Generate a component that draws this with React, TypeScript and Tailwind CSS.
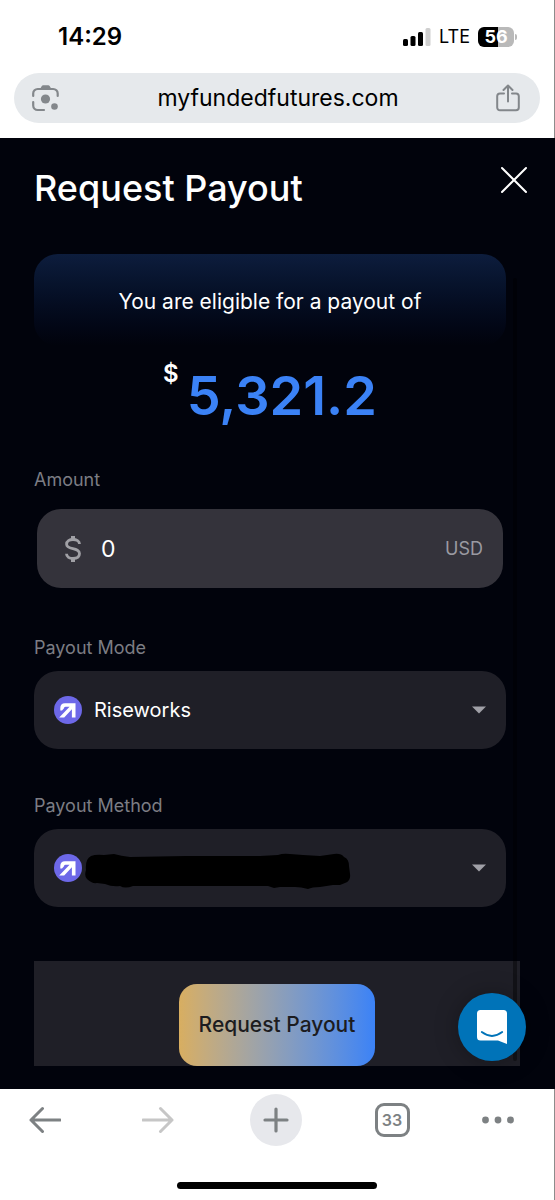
import type { ReactNode } from "react";

const StatusBar = () => (
  <div className="flex h-[73px] items-center justify-between pl-[58px] pr-[37px] text-black">
    <span className="text-2xl font-semibold">14:29</span>
    <div className="flex items-center gap-2">
      <svg className="h-[18px] w-7" viewBox="0 0 28 18" aria-hidden="true">
        <rect x="0" y="11" width="5" height="7" rx="1.5" />
        <rect x="7.5" y="8" width="5" height="10" rx="1.5" />
        <rect x="15" y="4" width="5" height="14" rx="1.5" />
        <rect x="22.5" y="0" width="5" height="18" rx="1.5" fill="#cfcfcf" />
      </svg>
      <span className="text-lg">LTE</span>
      <div className="flex items-center gap-px">
        <div className="flex h-5 w-9 items-center justify-center rounded-md bg-linear-to-r from-black from-56% to-[#b9b9b9] to-56% text-lg font-bold text-white">
          56
        </div>
        <div className="h-1.5 w-0.5 rounded-r bg-[#b9b9b9]" />
      </div>
    </div>
  </div>
);

const AddressBar = () => (
  <div className="mx-[14px] flex h-[50px] items-center justify-between rounded-full bg-[#e6e9ec] pl-[18px] pr-5">
    <button type="button" aria-label="Search with camera">
      <svg className="h-7 w-7" viewBox="0 0 28 28" fill="none" stroke="#83878b" strokeWidth="2.2" strokeLinecap="round" aria-hidden="true">
        <path d="M1.2 12V9.5a4.5 4.5 0 0 1 4.5-4.5h15.500a4.5 4.5 0 0 1 4.5 4.5V12M1.2 18v3.5a4.5 4.5 0 0 0 4.5 4.5H12" />
        <path d="M8 5l1.8-3a1.5 1.5 0 0 1 1.3-.8h5.2a1.5 1.5 0 0 1 1.3.8L19.5 5z" fill="#83878b" stroke="none" />
        <circle cx="13.5" cy="15" r="4.6" fill="#83878b" stroke="none" />
        <circle cx="22.5" cy="22.5" r="3.3" fill="#83878b" stroke="none" />
      </svg>
    </button>
    <span className="text-[23px] text-black">myfundedfutures.com</span>
    <button type="button" aria-label="Share">
      <svg className="h-7 w-6" viewBox="0 0 24 28" fill="none" stroke="#83878b" strokeWidth="2" strokeLinecap="round" strokeLinejoin="round" aria-hidden="true">
        <path d="M8 9.5H4A2.8 2.8 0 0 0 1.2 12.300V23.500A2.8 2.8 0 0 0 4 26.300H20A2.8 2.8 0 0 0 22.800 23.500V12.300A2.8 2.8 0 0 0 20 9.500H16" />
        <path d="M12 17.500V1.500M7.500 6L12 1.500L16.500 6" />
      </svg>
    </button>
  </div>
);

const RiseLogo = () => (
  <svg className="h-7 w-7 shrink-0" viewBox="0 0 28 28" aria-hidden="true">
    <circle cx="14" cy="14" r="14" fill="#6d68e8" />
    <path d="M21.5 7.3V21.5H17.9V13.2L10.200 21.500H5.200L15.600 10.800H11.500Q10 10.800 9.800 12.500L8 14.500H6.300V12Q6.300 7.300 11 7.300Z" fill="#fff" />
  </svg>
);

type SelectFieldProps = {
  id: string;
  label: string;
  value: string;
  children?: ReactNode;
};

const SelectField = ({ id, label, value, children }: SelectFieldProps) => (
  <div className="mr-[14px]">
    <label htmlFor={id} className="block h-[34px] text-lg leading-[22px] text-[#7c7d84]">
      {label}
    </label>
    <div className="relative flex h-[78px] items-center gap-3 rounded-3xl bg-[#1f1f27] px-5">
      <RiseLogo />
      <select id={id} className="h-full min-w-0 flex-1 appearance-none bg-transparent text-xl text-white outline-none">
        <option>{value}</option>
      </select>
      <svg className="h-2 w-3.5 shrink-0" viewBox="0 0 14 8" fill="#a0a0a7" aria-hidden="true">
        <path d="M0 0.5H14L7 7.5Z" />
      </svg>
      {children}
    </div>
  </div>
);

const PayoutForm = () => (
  <main className="relative bg-[#01030c] pb-[23px] pl-[34px] pr-[35px] pt-7 text-white">
    <header className="flex h-[88px] items-start justify-between">
      <h1 className="text-4xl leading-[44px] font-medium">Request Payout</h1>
      <button type="button" aria-label="Close" className="-mr-2">
        <svg className="h-7 w-7" viewBox="0 0 28 28" stroke="#fff" strokeWidth="2" strokeLinecap="round" aria-hidden="true">
          <path d="M2 2L26 26M26 2L2 26" />
        </svg>
      </button>
    </header>

    <div className="mr-[14px] flex h-[92px] items-center justify-center rounded-3xl bg-linear-to-b from-[#0d1d3d] to-[#01030c] pt-1">
      <p className="text-[21px]">You are eligible for a payout of</p>
    </div>

    <p className="mr-[14px] flex h-[123px] items-start justify-center gap-2 pt-3">
      <span className="text-2xl font-semibold">$</span>
      <span className="pt-2 text-[54px] leading-[60px] font-semibold text-[#3b82f6]">5,321.2</span>
    </p>

    <div className="mr-[14px]">
      <label htmlFor="amount" className="block h-10 text-lg leading-[22px] text-[#7c7d84]">
        Amount
      </label>
      <div className="mx-[3px] flex h-[79px] items-center gap-5 rounded-3xl bg-[#34333b] px-5">
        <svg className="ml-2 h-7 w-4 shrink-0" viewBox="0 0 16 28" fill="none" stroke="#a0a0a5" strokeWidth="2.8" aria-hidden="true">
          <path d="M14.5 9C14.5 6 11.5 4.5 8 4.5S1.6 6 1.6 9.200C1.6 15.500 14.500 11.800 14.500 18.600C14.500 22 11.500 23.500 8 23.500S1.500 22 1.500 18.800" />
          <path d="M8 1V5M8 23V27" strokeWidth="4" />
        </svg>
        <input id="amount" type="text" inputMode="decimal" defaultValue="0" className="h-full min-w-0 flex-1 bg-transparent text-[23px] text-white outline-none" />
        <span className="text-lg text-[#9a9aa1]">USD</span>
      </div>
    </div>

    <div className="mt-[49px] flex flex-col gap-[46px]">
      <SelectField id="payout-mode" label="Payout Mode" value="Riseworks" />
      <SelectField id="payout-method" label="Payout Method" value="">
        {/* Account details stay covered */}
        <svg className="pointer-events-none absolute left-[50px] top-6 h-9 w-[268px]" viewBox="0 0 268 36" aria-hidden="true">
          <path d="M7 3Q12 1 20 2L30 1Q37 3 46 4L102 3L176 3L194 2Q199 0 206 1L219 2L236 3L250 1Q257 0 260 4Q265 6 265 13L266 21Q267 28 261 30L256 32H249L236 34Q228 34 224 36Q217 34 211 34H196L190 35L184 33H49Q41 36 36 33Q28 34 21 31L13 30Q8 31 3 26Q0 23 2 17Q1 6 7 3Z" />
        </svg>
      </SelectField>
    </div>

    <footer className="mt-[54px] flex justify-center bg-[#1f1f27] pt-[23px]">
      <button type="button" className="h-[82px] w-[196px] rounded-[18px] bg-linear-to-r from-[#d8ae60] to-[#3b82f6] text-[21px] font-medium text-[#1c1c20]">
        Request Payout
      </button>
    </footer>

    {/* Scroll track */}
    <div className="absolute bottom-7 right-[38px] top-[140px] w-1 rounded-full bg-black/40" />

    <button type="button" aria-label="Open chat" className="absolute bottom-7 right-[29px] flex h-[68px] w-[68px] items-center justify-center rounded-full bg-[#0073b8] shadow-[0_1px_24px_rgba(0,0,0,0.3)]">
      <svg className="h-[34px] w-[30px]" viewBox="0 0 30 34" aria-hidden="true">
        <path d="M3.5 0H26.5A3.5 3.5 0 0 1 30 3.5V34L21 30.5H3.5A3.5 3.5 0 0 1 0 27V3.5A3.5 3.5 0 0 1 3.5 0Z" fill="#fff" />
        <path d="M4.8 22Q15 29.8 25.2 22" fill="none" stroke="#0073b8" strokeWidth="1.9" strokeLinecap="round" />
      </svg>
    </button>
  </main>
);

const BrowserToolbar = () => (
  <div className="border-r border-[#8c8c8c] bg-white pb-3">
    <nav className="flex h-[93px] items-start justify-between pl-[29px] pr-10 pt-[5px]">
      <button type="button" aria-label="Back" className="flex h-[52px] items-center">
        <svg className="h-7 w-8" viewBox="0 0 32 28" fill="none" stroke="#7d8183" strokeWidth="3" strokeLinecap="round" strokeLinejoin="round" aria-hidden="true">
          <path d="M31 14H2M13.5 2.5L2 14L13.5 25.5" />
        </svg>
      </button>
      <button type="button" aria-label="Forward" className="ml-2 flex h-[52px] items-center">
        <svg className="h-7 w-8" viewBox="0 0 32 28" fill="none" stroke="#c6c6c6" strokeWidth="3" strokeLinecap="round" strokeLinejoin="round" aria-hidden="true">
          <path d="M1 14H30M18.5 2.5L30 14L18.5 25.5" />
        </svg>
      </button>
      <button type="button" aria-label="New tab" className="ml-1 flex h-[52px] w-[52px] items-center justify-center rounded-full bg-[#e7e8ec]">
        <svg className="h-[26px] w-[26px]" viewBox="0 0 26 26" stroke="#7d8183" strokeWidth="3.2" strokeLinecap="round" aria-hidden="true">
          <path d="M13 2V24M2 13H24" />
        </svg>
      </button>
      <button type="button" aria-label="Tabs" className="mt-[9px] flex h-[34px] w-[35px] items-center justify-center rounded-[9px] border-3 border-[#7d8183] text-base font-semibold text-[#7d8183]">
        33
      </button>
      <button type="button" aria-label="More" className="flex h-[52px] items-center">
        <svg className="h-2 w-8" viewBox="0 0 32 8" fill="#7d8183" aria-hidden="true">
          <circle cx="3.5" cy="4" r="3.4" />
          <circle cx="16" cy="4" r="3.4" />
          <circle cx="28.5" cy="4" r="3.4" />
        </svg>
      </button>
    </nav>
    <div className="mx-auto h-[7px] w-[36%] rounded-full bg-black" />
  </div>
);

export default function App() {
  return (
    <div className="min-h-screen bg-white font-['Inter',sans-serif]">
      <div className="border-r border-[#8c8c8c] bg-white pb-[15px]">
        <StatusBar />
        <AddressBar />
      </div>
      <PayoutForm />
      <BrowserToolbar />
    </div>
  );
}
